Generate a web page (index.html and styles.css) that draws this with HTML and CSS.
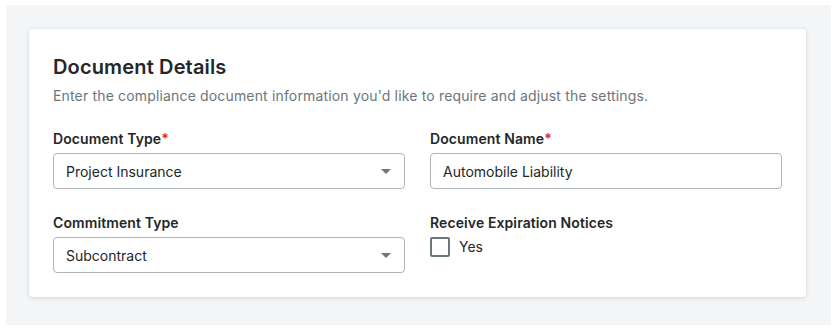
FILE: index.html
```html
<!DOCTYPE html>
<html lang="en">
<head>
    <meta charset="UTF-8">
    <meta name="viewport" content="width=device-width, initial-scale=1.0">
    <title>Document Details</title>
    <link rel="stylesheet" href="styles.css">
</head>
<body>
    <div class="page">
        <div class="card">
            <h1>Document Details</h1>
            <p class="subtitle">Enter the compliance document information you'd like to require and adjust the settings.</p>
            <div class="fields">
                <div class="field">
                    <label>Document Type<span class="required">*</span></label>
                    <div class="select">
                        <span>Project Insurance</span>
                        <span class="caret"></span>
                    </div>
                </div>
                <div class="field">
                    <label>Document Name<span class="required">*</span></label>
                    <div class="input">Automobile Liability</div>
                </div>
                <div class="field">
                    <label>Commitment Type</label>
                    <div class="select">
                        <span>Subcontract</span>
                        <span class="caret"></span>
                    </div>
                </div>
                <div class="field">
                    <label>Receive Expiration Notices</label>
                    <div class="check-row">
                        <span class="checkbox"></span>
                        <span>Yes</span>
                    </div>
                </div>
            </div>
        </div>
    </div>
</body>
</html>
```

FILE: styles.css
```css
* {
    box-sizing: border-box;
}
body {
    margin: 0;
    background-color: #ffffff;
    font-family: Inter, "Noto Sans", sans-serif;
    color: #232729;
}
.page {
    margin: 5px 6px 0 6px;
    padding: 24px 25px 28px 23px;
    background-color: #f4f5f6;
}
.card {
    background-color: #ffffff;
    border-radius: 4px;
    box-shadow: 0 1px 4px rgba(0, 0, 0, 0.15);
    padding: 24px 24px 24px 24px;
}
h1 {
    margin: 0;
    font-size: 20px;
    line-height: 28px;
    font-weight: 600;
    letter-spacing: 0.15px;
}
.subtitle {
    margin: 5px 0 0 0;
    font-size: 14px;
    line-height: 20px;
    color: #6a767c;
    letter-spacing: 0.16px;
}
.fields {
    display: grid;
    grid-template-columns: 1fr 1fr;
    column-gap: 25px;
    row-gap: 24px;
    margin-top: 23px;
}
.field label {
    display: block;
    font-size: 14px;
    line-height: 20px;
    font-weight: 600;
    letter-spacing: 0.1px;
    margin-bottom: 4px;
}
.required {
    color: #e0281f;
}
.select, .input {
    height: 36px;
    border: 1px solid #acb5b9;
    border-radius: 4px;
    padding: 0 12px;
    font-size: 14px;
    display: flex;
    align-items: center;
    justify-content: space-between;
}
.caret {
    width: 0;
    height: 0;
    border-left: 5px solid transparent;
    border-right: 5px solid transparent;
    border-top: 5px solid #6a767c;
    margin-right: 1px;
}
.check-row {
    display: flex;
    align-items: center;
    gap: 9px;
    font-size: 14px;
    line-height: 20px;
}
.checkbox {
    width: 20px;
    height: 20px;
    border: 2px solid #6a767c;
    border-radius: 2px;
}
```
